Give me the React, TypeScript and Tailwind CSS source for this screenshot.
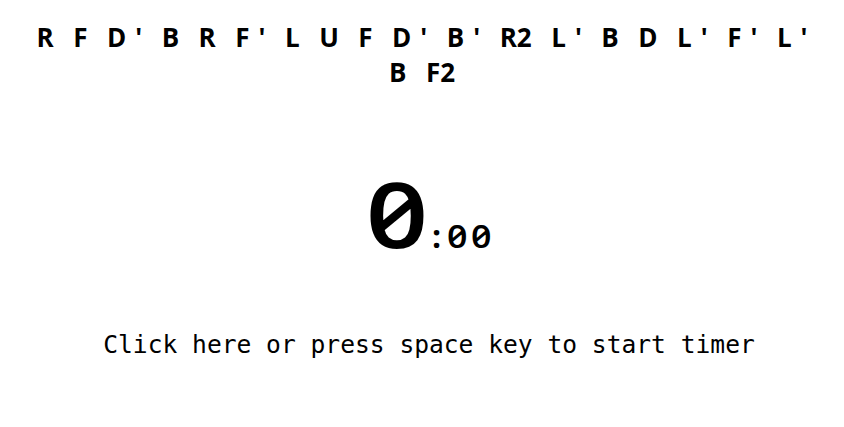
import React from "react";

const moves = ["R", "F", "D'", "B", "R", "F'", "L", "U", "F", "D'", "B'", "R2", "L'", "B", "D", "L'", "F'", "L'", "B", "F2"];

function Move({ m }: { m: string }) {
  const prime = m.endsWith("'");
  const base = prime ? m.slice(0, -1) : m;
  return (
    <span className="inline-block">
      {base}
      {prime && <span className="ml-[9px]">'</span>}
    </span>
  );
}

export default function App() {
  return (
    <div className="w-[844px] h-[427px] bg-white text-black flex flex-col items-center">
      <div className="mt-[20px] w-[792px] flex flex-wrap justify-center gap-x-[19.5px] text-[26px] font-bold leading-[35px] font-['Open_Sans',sans-serif]">
        {moves.map((m, i) => (
          <Move key={i} m={m} />
        ))}
      </div>
      <div className="mt-[78px] pl-[17px] flex items-baseline leading-none font-['Open_Sans',sans-serif] [font-feature-settings:'zero']">
        <span className="inline-block w-[60px] text-center text-[91px] font-semibold">
          <span className="inline-block scale-x-[1.2]">0</span>
        </span>
        <span className="inline-block w-[18px] text-center text-[32px] font-bold">:</span>
        <span className="inline-block w-[24px] text-center text-[32px] font-semibold">
          <span className="inline-block scale-x-[1.12]">0</span>
        </span>
        <span className="inline-block w-[24px] text-center text-[32px] font-semibold">
          <span className="inline-block scale-x-[1.12]">0</span>
        </span>
      </div>
      <div className="mt-[74px] ml-[14px] text-[24.6px] leading-none font-['DejaVu_Sans_Mono',monospace]">
        Click here or press space key to start timer
      </div>
    </div>
  );
}
